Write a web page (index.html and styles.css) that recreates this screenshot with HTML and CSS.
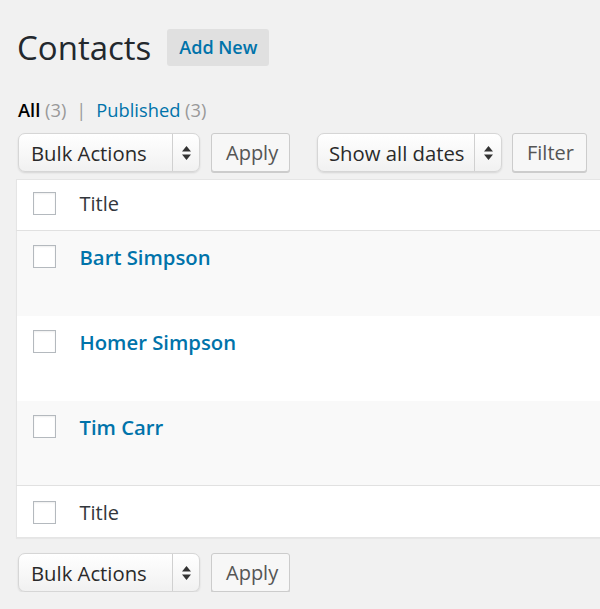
FILE: index.html
```html
<!DOCTYPE html>
<html lang="en">
<head>
    <meta charset="UTF-8">
    <title>Contacts</title>
    <link rel="stylesheet" href="styles.css">
</head>
<body>

<div class="wrap">
    <div class="page-header">
        <h1>Contacts</h1>
        <a href="#" class="add-new">Add New</a>
    </div>

    <ul class="subsubsub">
        <li class="current">All <span class="count">(3)</span></li>
        <li class="sep">|</li>
        <li><a href="#">Published</a> <span class="count">(3)</span></li>
    </ul>

    <div class="tablenav">
        <div class="select bulk">
            <span class="select-label">Bulk Actions</span>
            <span class="select-arrow">
                <svg width="9" height="14" viewBox="0 0 9 14"><path d="M4.5 0 L9 5.5 L0 5.5 Z M4.5 14 L9 8.5 L0 8.5 Z" fill="#333"/></svg>
            </span>
        </div>
        <button type="button" class="button apply">Apply</button>

        <div class="select dates">
            <span class="select-label">Show all dates</span>
            <span class="select-arrow">
                <svg width="9" height="14" viewBox="0 0 9 14"><path d="M4.5 0 L9 5.5 L0 5.5 Z M4.5 14 L9 8.5 L0 8.5 Z" fill="#333"/></svg>
            </span>
        </div>
        <button type="button" class="button filter">Filter</button>
    </div>

    <table class="list-table">
        <thead>
            <tr>
                <th class="check-column"><span class="checkbox"></span></th>
                <th class="title-column">Title</th>
            </tr>
        </thead>
        <tbody>
            <tr class="alt">
                <td class="check-column"><span class="checkbox"></span></td>
                <td class="title-column"><a href="#" class="row-title">Bart Simpson</a></td>
            </tr>
            <tr>
                <td class="check-column"><span class="checkbox"></span></td>
                <td class="title-column"><a href="#" class="row-title">Homer Simpson</a></td>
            </tr>
            <tr class="alt">
                <td class="check-column"><span class="checkbox"></span></td>
                <td class="title-column"><a href="#" class="row-title">Tim Carr</a></td>
            </tr>
        </tbody>
        <tfoot>
            <tr>
                <th class="check-column"><span class="checkbox"></span></th>
                <th class="title-column">Title</th>
            </tr>
        </tfoot>
    </table>

    <div class="tablenav bottom">
        <div class="select bulk">
            <span class="select-label">Bulk Actions</span>
            <span class="select-arrow">
                <svg width="9" height="14" viewBox="0 0 9 14"><path d="M4.5 0 L9 5.5 L0 5.5 Z M4.5 14 L9 8.5 L0 8.5 Z" fill="#333"/></svg>
            </span>
        </div>
        <button type="button" class="button apply">Apply</button>
    </div>
</div>

</body>
</html>
```

FILE: styles.css
```css
body {
    margin: 0;
    background-color: #f1f1f1;
    font-family: "Open Sans", sans-serif;
    font-size: 20px;
    color: #32373c;
    overflow: hidden;
}

a {
    color: #0073aa;
    text-decoration: none;
}

.wrap {
    padding-left: 16px;
}

.page-header {
    display: flex;
    align-items: center;
    margin-top: 29px;
    height: 37px;
}

.page-header h1 {
    margin: 0 16px 0 1px;
    font-size: 33px;
    font-weight: 400;
    line-height: 37px;
    color: #23282d;
}

.add-new {
    display: block;
    height: 37px;
    line-height: 37px;
    padding: 0 12px;
    background-color: #e0e0e0;
    border-radius: 3px;
    font-size: 18px;
    font-weight: 600;
}

.subsubsub {
    list-style: none;
    display: flex;
    gap: 8px;
    margin: 32px 0 0 2px;
    padding: 0;
    font-size: 18.3px;
    line-height: 24px;
    color: #666;
}

.subsubsub .current {
    color: #000;
    font-weight: 600;
}

.subsubsub .count {
    color: #999;
    font-weight: 400;
}

.subsubsub .sep {
    color: #999;
    margin: 0 2px;
}

.tablenav {
    display: flex;
    align-items: center;
    margin: 11px 0 0 2px;
    height: 39px;
}

.tablenav.bottom {
    margin-top: 15px;
}

.select {
    display: flex;
    align-items: stretch;
    height: 39px;
    box-sizing: border-box;
    border: 1px solid #d6d6d6;
    border-radius: 7px;
    background: linear-gradient(#ffffff, #f1f1f1);
    box-shadow: 0 1px 2px rgba(0, 0, 0, 0.12), inset 0 1px 0 #fff;
    color: #2a2a2a;
    font-size: 20.3px;
}

.select-label {
    display: flex;
    align-items: center;
    padding-left: 12px;
    flex: 1;
}

.select-arrow {
    display: flex;
    align-items: center;
    justify-content: center;
    width: 26px;
    border-left: 1px solid #d0d0d0;
}

.select.bulk {
    width: 182px;
}

.select.dates {
    width: 185px;
    margin-left: 27px;
}

.select.dates .select-label {
    padding-left: 11px;
}

.button {
    height: 39px;
    box-sizing: border-box;
    margin-left: 11px;
    padding: 0 14px;
    background-color: #f7f7f7;
    border: 1px solid #cccccc;
    border-radius: 3px;
    box-shadow: 0 1px 0 #ccc;
    font-family: "Open Sans", sans-serif;
    font-size: 20px;
    color: #555;
    cursor: pointer;
}

.button.apply {
    width: 79px;
}

.button.filter {
    width: 75px;
    margin-left: 10px;
}

.list-table {
    margin-top: 7px;
    width: calc(100% + 40px);
    border-collapse: collapse;
    border: 1px solid #e5e5e5;
    background-color: #fff;
    box-shadow: 0 1px 1px rgba(0, 0, 0, 0.04);
}

.list-table th,
.list-table td {
    padding: 0;
    text-align: left;
    vertical-align: top;
    font-weight: 400;
}

.check-column {
    width: 63px;
}

.checkbox {
    display: block;
    width: 23px;
    height: 23px;
    box-sizing: border-box;
    margin-left: 16px;
    border: 1px solid #b4b9be;
    background-color: #fff;
    box-shadow: inset 0 1px 2px rgba(0, 0, 0, 0.07);
}

.list-table thead th {
    height: 51px;
    padding-top: 12px;
    box-sizing: border-box;
    line-height: 24px;
    border-bottom: 1px solid #e1e1e1;
}

.list-table tfoot th {
    height: 52px;
    padding-top: 15px;
    box-sizing: border-box;
    line-height: 24px;
    border-top: 1px solid #e1e1e1;
}

.list-table tbody td {
    height: 85px;
    padding-top: 14px;
    box-sizing: border-box;
}

.list-table tbody td.title-column {
    padding-top: 14px;
    line-height: 24px;
}

.list-table tbody tr.alt {
    background-color: #f9f9f9;
}

.row-title {
    font-weight: 600;
    font-size: 20.3px;
}
```
